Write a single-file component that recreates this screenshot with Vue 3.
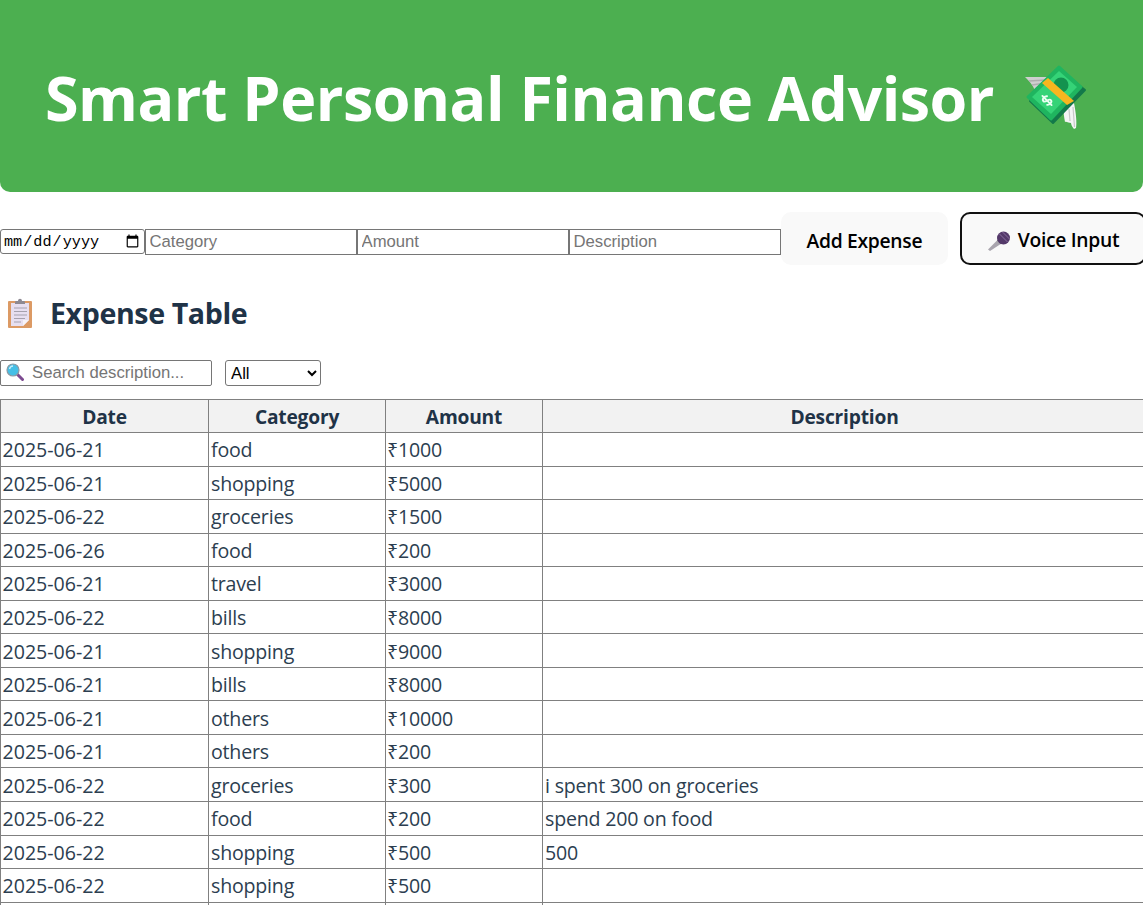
<template>
  <div class="page">
    <header class="banner">
      <h1>
        Smart Personal Finance Advisor
        <svg class="money" viewBox="0 0 70 70" aria-hidden="true">
          <path d="M4 14 L26 14 L31 20 L14 28 C12 22 8 18 4 14Z" fill="#cfcfcf" />
          <path d="M8 18 L25 17 M11 22 L24 20" stroke="#aeaeae" stroke-width="1.4" />
          <path d="M43 43 L53 40 C55 50 56 60 55 65 L53 66 C51 64 50 61 50 60 C48 60 45 58 44 59 C43 54 42 48 43 43Z" fill="#f4f4f4" />
          <path d="M48 46 L49 58 M52 44 L53.5 64" stroke="#c8c8c8" stroke-width="1.2" />
          <path d="M38 6 L64 27 L32 60 L9 38Z" fill="#13794a" stroke="#13794a" stroke-width="2" stroke-linejoin="round" />
          <path d="M38 4 L60 24 L30 56 L7 34Z" fill="#1fb55f" stroke="#1fb55f" stroke-width="3" stroke-linejoin="round" />
          <path d="M38 8 L56 24 L30 51 L11 34Z" fill="#35d377" />
          <circle cx="40" cy="22" r="7.5" fill="#13924f" />
          <path d="M21 20 L27 15 L53 38 L46 42Z" fill="#f8b61f" />
          <g transform="translate(26 37.5) rotate(-45)" fill="none" stroke="#eafff2" stroke-width="1.9" stroke-linecap="round">
            <path d="M3 -3 C1.5 -4.8 -3 -4.8 -3 -2 C-3 0.8 3 -0.4 3 2.4 C3 5 -1.5 5 -3 3.2" />
            <path d="M0 -6.5 V6.5" />
          </g>
        </svg>
      </h1>
    </header>

    <form class="expense-form" @submit.prevent>
      <input class="date-input" type="date" />
      <input class="field" type="text" placeholder="Category" />
      <input class="field" type="text" placeholder="Amount" />
      <input class="field" type="text" placeholder="Description" />
      <button class="btn" type="submit">Add Expense</button>
      <button class="btn btn-voice" type="button">
        <svg class="mic" viewBox="0 0 24 24" aria-hidden="true">
          <path d="M1 21.5 L12 10.5 L16 14.5 L3 23 Z" fill="#a9a5ae" />
          <path d="M10 12.5 L12 10.5 L16 14.5 L13.5 16.2 Z" fill="#6f6a76" />
          <circle cx="16.5" cy="10" r="6.5" fill="#54396a" />
          <path d="M12.5 6 L20.5 14 M15.5 4 L22.5 11" stroke="#8a6fa0" stroke-width="1" />
        </svg>
        Voice Input
      </button>
    </form>

    <h2 class="section-title">
      <svg class="clipboard" viewBox="0 0 24 30" aria-hidden="true">
        <rect x="0" y="3" width="24" height="27" rx="1" fill="#dc9a64" />
        <path d="M3 5 H21 V22 L15 28 H3Z" fill="#e7dff0" />
        <path d="M21 22 L15 28 V22Z" fill="#f7f3f8" />
        <path d="M8 3 H10 C10 0 14 0 14 3 H16 C17 3 17 4 17 6 H7 C7 4 7 3 8 3Z" fill="#8d8992" />
        <path d="M6 10 H19 M6 13.5 H19 M6 17 H19 M6 20.5 H17 M6 24 H13" stroke="#a5a1ad" stroke-width="1.2" />
      </svg>
      <span class="section-label">Expense Table</span>
    </h2>

    <div class="filters">
      <div class="search-box">
        <input class="search" type="text" placeholder="Search description..." />
        <svg class="glass" viewBox="0 0 18 18" aria-hidden="true">
          <path d="M11 11 L16.5 16.5" stroke="#7c4a90" stroke-width="3" stroke-linecap="round" />
          <circle cx="7" cy="7" r="6" fill="#45bfe6" stroke="#8a9aa5" stroke-width="1.2" />
          <path d="M3.5 6 C4 4 5 3 7 3" stroke="#c5eefa" stroke-width="1.4" fill="none" />
        </svg>
      </div>
      <select class="category-filter">
        <option>All</option>
        <option>food</option>
        <option>shopping</option>
        <option>groceries</option>
        <option>travel</option>
        <option>bills</option>
        <option>others</option>
      </select>
    </div>

    <table>
      <colgroup>
        <col class="col-date" />
        <col class="col-category" />
        <col class="col-amount" />
        <col />
      </colgroup>
      <thead>
        <tr>
          <th>Date</th>
          <th>Category</th>
          <th>Amount</th>
          <th>Description</th>
        </tr>
      </thead>
      <tbody>
        <tr v-for="(row, i) in expenses" :key="i">
          <td class="date-cell">{{ row.date }}</td>
          <td>{{ row.category }}</td>
          <td class="amount-cell">{{ row.amount ? '₹' + row.amount : '' }}</td>
          <td>{{ row.description }}</td>
        </tr>
      </tbody>
    </table>
  </div>
</template>

<script setup>
const expenses = [
  { date: '2025-06-21', category: 'food', amount: 1000, description: '' },
  { date: '2025-06-21', category: 'shopping', amount: 5000, description: '' },
  { date: '2025-06-22', category: 'groceries', amount: 1500, description: '' },
  { date: '2025-06-26', category: 'food', amount: 200, description: '' },
  { date: '2025-06-21', category: 'travel', amount: 3000, description: '' },
  { date: '2025-06-22', category: 'bills', amount: 8000, description: '' },
  { date: '2025-06-21', category: 'shopping', amount: 9000, description: '' },
  { date: '2025-06-21', category: 'bills', amount: 8000, description: '' },
  { date: '2025-06-21', category: 'others', amount: 10000, description: '' },
  { date: '2025-06-21', category: 'others', amount: 200, description: '' },
  { date: '2025-06-22', category: 'groceries', amount: 300, description: 'i spent 300 on groceries' },
  { date: '2025-06-22', category: 'food', amount: 200, description: 'spend 200 on food' },
  { date: '2025-06-22', category: 'shopping', amount: 500, description: '500' },
  { date: '2025-06-22', category: 'shopping', amount: 500, description: '' },
  { date: '', category: '', amount: 0, description: '' }
];
</script>

<style>
html, body {
  margin: 0;
  overflow: hidden;
  height: 905px;
  background: #fff;
}
</style>

<style scoped>
.page {
  width: 1143px;
  font-family: "Open Sans", "Noto Sans", sans-serif;
  color: #2c3e50;
}

.banner {
  height: 192px;
  box-sizing: border-box;
  background-color: #4caf50;
  border-radius: 0 0 10px 10px;
  padding: 60px 0 0 45px;
}

h1 {
  margin: 0;
  font-size: 61px;
  line-height: 76px;
  font-weight: 700;
  color: #fff;
  white-space: nowrap;
  letter-spacing: -0.5px;
  display: flex;
  align-items: center;
}

.money {
  width: 70px;
  height: 70px;
  margin-left: 27px;
  flex: none;
}

.expense-form {
  display: flex;
  align-items: center;
  margin-top: 20px;
  width: 1160px;
}

input,
select {
  box-sizing: border-box;
  font-family: "Liberation Sans", Arial, sans-serif;
  font-size: 16.7px;
  color: #000;
  background: #fff;
}

.expense-form input {
  margin-top: 6px;
}

input::placeholder {
  color: #757575;
}

.date-input {
  width: 145px;
  height: 25px;
  border: 1px solid #767676;
  border-radius: 3px;
  padding: 1px 2px;
  font-family: "Liberation Mono", monospace;
  font-size: 15.2px;
}

.field {
  width: 212px;
  height: 26px;
  border: 1.5px solid #767676;
  padding: 1px 3.5px;
}

.btn {
  height: 53px;
  box-sizing: border-box;
  padding: 3px 24.5px 0;
  border: 1px solid transparent;
  border-radius: 10px;
  background-color: #f9f9f9;
  font-family: "Open Sans", "Noto Sans", sans-serif;
  font-size: 19.3px;
  font-weight: 600;
  letter-spacing: -0.3px;
  color: #000;
  white-space: nowrap;
  display: flex;
  align-items: center;
  flex: none;
}

.btn-voice {
  margin-left: 12px;
  border: 2px solid #111;
  padding: 2px 25px 0;
}

.mic {
  width: 24px;
  height: 24px;
  margin-right: 7px;
}

.section-title {
  display: flex;
  align-items: center;
  margin: 28px 0 0;
  padding-left: 8px;
  height: 40px;
  font-size: 28.6px;
  font-weight: 700;
  letter-spacing: -0.4px;
  color: #1f3347;
}

.section-label {
  margin-top: -2px;
}

.clipboard {
  width: 24px;
  height: 30px;
  margin-right: 18px;
}

.filters {
  display: flex;
  gap: 13px;
  margin-top: 27px;
}

.search-box {
  position: relative;
}

.search {
  width: 212px;
  height: 26px;
  border: 1px solid #767676;
  border-radius: 2px;
  padding: 1px 2px 1px 31px;
}

.glass {
  position: absolute;
  left: 6px;
  top: 3px;
  width: 18px;
  height: 18px;
}

.category-filter {
  width: 96px;
  height: 26px;
  border: 1px solid #767676;
  border-radius: 3px;
  padding-left: 1px;
}

table {
  width: 1147px;
  margin-top: 13px;
  border-collapse: collapse;
  table-layout: fixed;
  font-size: 19.6px;
}

.col-date {
  width: 208px;
}

.col-category {
  width: 177px;
}

.col-amount {
  width: 157px;
}

th,
td {
  border: 1px solid #808080;
  height: 33.55px;
  box-sizing: border-box;
  padding: 1px 2px 0;
  text-align: left;
  white-space: nowrap;
  letter-spacing: -0.2px;
}

.date-cell {
  letter-spacing: 0;
  padding-left: 1.5px;
}

.amount-cell {
  padding-left: 1px;
}

th {
  height: 33px;
  text-align: center;
  background-color: #f2f2f2;
  font-size: 19.2px;
  font-weight: 700;
  color: #1f3347;
}
</style>
